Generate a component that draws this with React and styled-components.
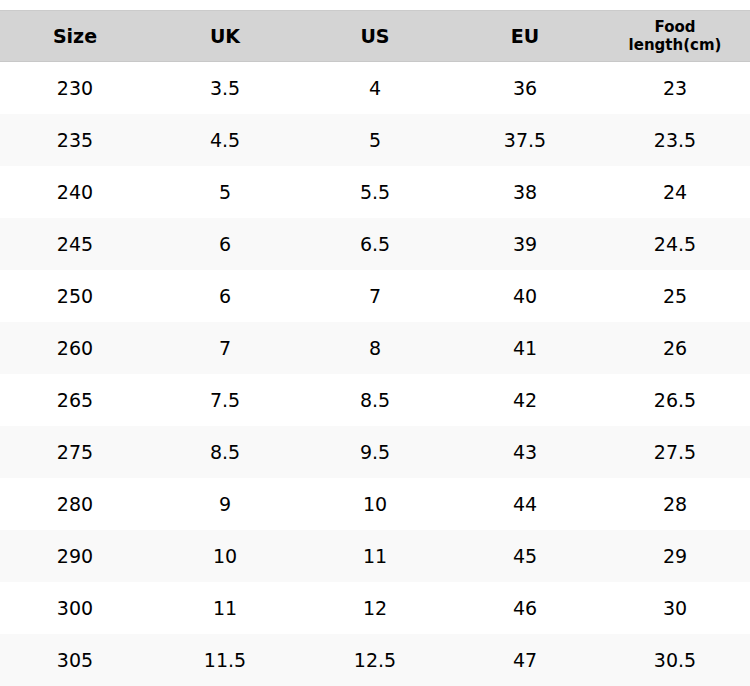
import styled, { createGlobalStyle } from "styled-components";

const GlobalStyle = createGlobalStyle`
  html, body {
    margin: 0;
    padding: 0;
    background: #ffffff;
  }
  body {
    font-family: "DejaVu Sans", "Liberation Sans", sans-serif;
    color: #000;
  }
`;

const Wrapper = styled.div`
  padding-top: 10px;
  width: 750px;
`;

const Table = styled.table`
  width: 100%;
  border-collapse: collapse;
  table-layout: fixed;
`;

const HeadCell = styled.th`
  height: 50px;
  padding: 0;
  background: #d4d4d4;
  border-top: 1px solid #cbcbcb;
  border-bottom: 1px solid #c8c8c8;
  font-size: ${(props) => (props.$small ? "15px" : "19px")};
  line-height: ${(props) => (props.$small ? "18px" : "normal")};
  font-weight: bold;
  text-align: center;
  vertical-align: middle;
`;

const Row = styled.tr`
  background: ${(props) => (props.$alt ? "#f9f9f9" : "#ffffff")};
`;

const Cell = styled.td`
  height: 52px;
  padding: 0;
  font-size: 19px;
  text-align: center;
  vertical-align: middle;
`;

const sizes = [
  ["230", "3.5", "4", "36", "23"],
  ["235", "4.5", "5", "37.5", "23.5"],
  ["240", "5", "5.5", "38", "24"],
  ["245", "6", "6.5", "39", "24.5"],
  ["250", "6", "7", "40", "25"],
  ["260", "7", "8", "41", "26"],
  ["265", "7.5", "8.5", "42", "26.5"],
  ["275", "8.5", "9.5", "43", "27.5"],
  ["280", "9", "10", "44", "28"],
  ["290", "10", "11", "45", "29"],
  ["300", "11", "12", "46", "30"],
  ["305", "11.5", "12.5", "47", "30.5"],
];

export default function App() {
  return (
    <>
      <GlobalStyle />
      <Wrapper>
        <Table>
          <thead>
            <tr>
              <HeadCell>Size</HeadCell>
              <HeadCell>UK</HeadCell>
              <HeadCell>US</HeadCell>
              <HeadCell>EU</HeadCell>
              <HeadCell $small>
                Food
                <br />
                length(cm)
              </HeadCell>
            </tr>
          </thead>
          <tbody>
            {sizes.map((row, i) => (
              <Row key={row[0]} $alt={i % 2 === 1}>
                {row.map((value, j) => (
                  <Cell key={j}>{value}</Cell>
                ))}
              </Row>
            ))}
          </tbody>
        </Table>
      </Wrapper>
    </>
  );
}
